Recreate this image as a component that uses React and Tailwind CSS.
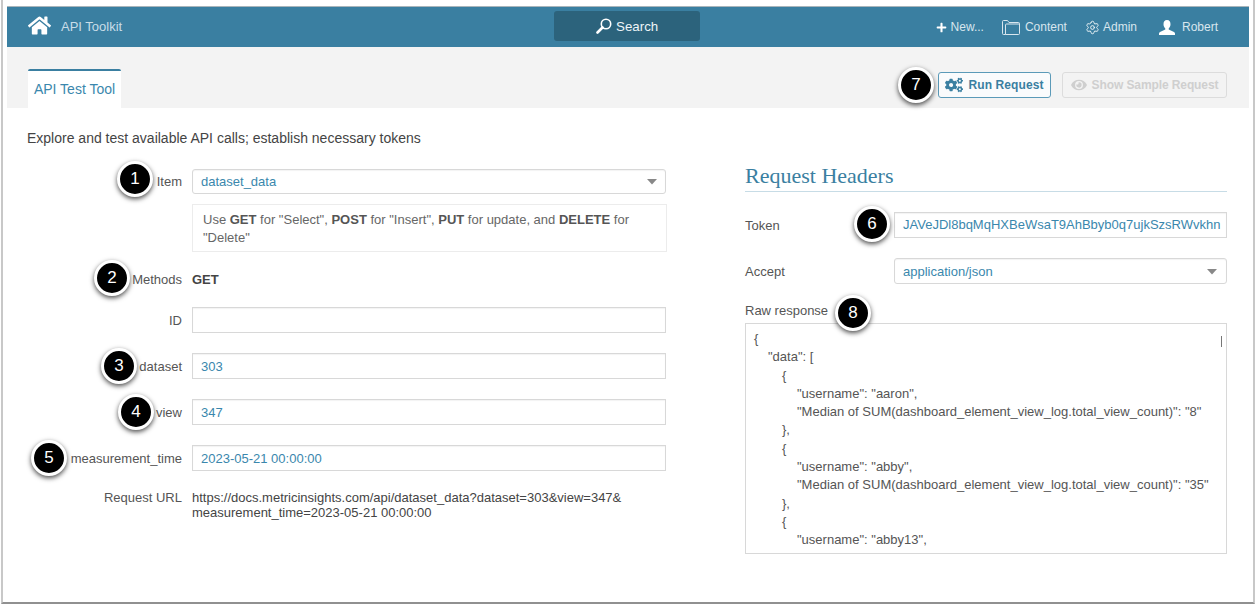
import React from "react";
import { FaHome, FaPlus, FaCogs, FaEye } from "react-icons/fa";
import { Settings } from "lucide-react";

function Badge({ n, className }) {
  return (
    <div
      className={
        "absolute w-[36px] h-[36px] rounded-full bg-black border-[3px] border-white shadow-[0_2px_5px_rgba(0,0,0,0.7)] flex items-center justify-center text-white text-[17px] font-['Liberation_Sans',sans-serif] " +
        className
      }
    >
      {n}
    </div>
  );
}

function Caret() {
  return (
    <svg width="10" height="6" viewBox="0 0 10 6" className="text-[#888]">
      <path d="M0 0h10L5 5.5z" fill="currentColor" />
    </svg>
  );
}

function Folder() {
  return (
    <svg width="18" height="15" viewBox="0 0 18 15" fill="none" stroke="currentColor" strokeWidth="1">
      <path d="M3.500 14.500h-2a1 1 0 0 1-1-1V1.500a1 1 0 0 1 1-1h4l1.500 2h9.500a1 1 0 0 1 1 1v10a1 1 0 0 1-1 1z" />
      <path d="M3.500 14.500V5a1 1 0 0 1 1-1h13" />
    </svg>
  );
}

function UserBust() {
  return (
    <svg width="16" height="15" viewBox="0 0 16 15" fill="currentColor">
      <path d="M8 0C5.500 0 4.500 2 4.500 4.200c0 2 1 3.500 1.800 4.200v1.200L1 12c-.7.4-1 1-1 1.500V15h16v-1.500c0-.5-.3-1.100-1-1.500L9.700 9.600V8.400c.8-.7 1.800-2.200 1.800-4.200C11.500 2 10.500 0 8 0z" />
    </svg>
  );
}

function Magnifier() {
  return (
    <svg width="16" height="16" viewBox="0 0 16 16" fill="none" stroke="#ffffff">
      <circle cx="10" cy="6" r="4.700" strokeWidth="1.600" />
      <path d="M6.500 9.500L1.500 14.500" strokeWidth="2.600" strokeLinecap="round" />
    </svg>
  );
}

function Row({ label, children, className = "" }) {
  return (
    <div className={"flex items-center " + className}>
      <div className="w-[155px] shrink-0 mr-[10px] pt-px text-right text-[13px] text-[#555]">{label}</div>
      {children}
    </div>
  );
}

function Box({ value, h = "h-[26px] pt-px", pr = "pr-[8px]", select = false, rounded = false, className = "" }) {
  return (
    <div
      className={`flex items-center justify-between bg-white border border-[#d8d8d8] shadow-[inset_0_1px_1px_rgba(0,0,0,0.05)] pl-[8px] text-[13px] text-[#3a87ad] whitespace-nowrap overflow-hidden ${h} ${pr} ${rounded ? "rounded-[3px]" : ""} ${className}`}
    >
      <span>{value}</span>
      {select && <Caret />}
    </div>
  );
}

const json = [
  [0, "{"],
  [1, '"data": ['],
  [2, "{"],
  [3, '"username": "aaron",'],
  [3, '"Median of SUM(dashboard_element_view_log.total_view_count)": "8"'],
  [2, "},"],
  [2, "{"],
  [3, '"username": "abby",'],
  [3, '"Median of SUM(dashboard_element_view_log.total_view_count)": "35"'],
  [2, "},"],
  [2, "{"],
  [3, '"username": "abby13",'],
];
const indents = ["pl-0", "pl-[14px]", "pl-[28px]", "pl-[43px]"];

export default function App() {
  return (
    <div className="relative w-[1256px] h-[606px] bg-white overflow-hidden font-['Liberation_Sans',Arial,sans-serif]">
      <div className="ml-px mr-px h-[604px] border-x-2 border-b-2 border-x-[#c8c8c8] border-b-[#909090] px-[4px] pt-[6px] flex flex-col">
        {/* top bar */}
        <header className="relative h-[41px] shrink-0 bg-[#3a7fa1] border-t border-t-[#a9b5bb] flex items-center text-[#d8e6ee] pl-[21px] pr-[31px]">
          <FaHome className="text-white w-[23px] h-[23px] -mt-[3px]" />
          <span className="ml-[10px] text-[13px] text-[#c9dde8]">API Toolkit</span>
          <div className="ml-[432px] -mt-[2px] w-[146px] h-[30px] rounded-[3px] bg-[#2c637c] flex items-center justify-center gap-[4px] text-[13.300px] text-[#eef5f8]">
            <Magnifier />
            <span className="pt-px">Search</span>
          </div>
          <div className="ml-auto flex items-center text-[12px]">
            <FaPlus className="w-[11px] h-[11px] text-white" />
            <span className="ml-[4px]">New...</span>
            <span className="ml-[18px]"><Folder /></span>
            <span className="ml-[5px]">Content</span>
            <Settings className="ml-[18px] w-[15px] h-[15px] text-[#eef5f8]" strokeWidth={1.500} />
            <span className="ml-[3px]">Admin</span>
            <span className="ml-[22px] text-white"><UserBust /></span>
            <span className="ml-[7px]">Robert</span>
          </div>
        </header>

        {/* tab band */}
        <div className="h-[61px] shrink-0 bg-[#f3f3f3] flex items-end pl-[21px] pr-[22px]">
          <div className="w-[93px] h-[39px] bg-white border-t-2 border-t-[#3a7fa1] rounded-t-[2px] flex items-center justify-center text-[14px] text-[#3a87ad]">
            API Test Tool
          </div>
          <div className="ml-auto self-start mt-[25px] flex items-center gap-[11px] text-[12px] font-bold">
            <div className="w-[113px] h-[26px] bg-[#fafbfc] border border-[#5b9ab8] rounded-[3px] flex items-center justify-center gap-[5px] tracking-[0.1px] text-[#3a7fa1]">
              <FaCogs className="w-[18px] h-[16px]" />
              Run Request
            </div>
            <div className="w-[165px] h-[26px] border border-[#dcdcdc] rounded-[3px] flex items-center justify-center gap-[5px] tracking-[-0.1px] text-[#cfcfcf]">
              <FaEye className="w-[16px] h-[14px]" />
              Show Sample Request
            </div>
          </div>
        </div>

        {/* body */}
        <main className="flex-1 pl-[20px]">
          <p className="mt-[21px] text-[14px] leading-[18px] text-[#444]">
            Explore and test available API calls; establish necessary tokens
          </p>
          <div className="mt-[15px] flex">
            <div className="w-[639px] shrink-0 pt-[7px]">
              <Row label="Item">
                <Box value="dataset_data" h="h-[25px]" select rounded className="w-[475px]" />
              </Row>
              <div className="ml-[165px] mt-[10px] w-[475px] h-[48px] border border-[#ececec] px-[10px] pt-[6px] text-[13px] leading-[18px] text-[#666]">
                Use <b className="text-[#555]">GET</b> for "Select", <b className="text-[#555]">POST</b> for "Insert", <b className="text-[#555]">PUT</b> for update, and <b className="text-[#555]">DELETE</b> for "Delete"
              </div>
              <Row label="Methods" className="mt-[18px] h-[18px]">
                <b className="pt-px text-[13px] text-[#444]">GET</b>
              </Row>
              <Row label="ID" className="mt-[19px]">
                <Box value="" className="w-[475px]" />
              </Row>
              <Row label="dataset" className="mt-[20px]">
                <Box value="303" className="w-[475px]" />
              </Row>
              <Row label="view" className="mt-[20px]">
                <Box value="347" className="w-[475px]" />
              </Row>
              <Row label="measurement_time" className="mt-[20px]">
                <Box value="2023-05-21 00:00:00" className="w-[475px]" />
              </Row>
              <div className="flex mt-[19px] text-[13px] leading-[15px] text-[#444]">
                <div className="w-[155px] shrink-0 mr-[10px] text-right text-[#555]">Request URL</div>
                <div className="w-[475px]">
                  https://docs.metricinsights.com/api/dataset_data?dataset=303&view=347&
                  <br />
                  measurement_time=2023-05-21 00:00:00
                </div>
              </div>
            </div>

            <div className="ml-[79px] w-[482px] shrink-0">
              <h2 className="h-[30px] border-b border-b-[#c7dce6] font-['Liberation_Serif',serif] text-[22px] leading-[28px] text-[#3a7fa1]">
                Request Headers
              </h2>
              <div className="mt-[20px] flex items-center">
                <div className="w-[149px] shrink-0 pt-px text-[13px] text-[#555]">Token</div>
                <Box value="JAVeJDl8bqMqHXBeWsaT9AhBbyb0q7ujkSzsRWvkhn" h="h-[26px]" className="w-[333px]" />
              </div>
              <div className="mt-[20px] flex items-center">
                <div className="w-[149px] shrink-0 pt-px text-[13px] text-[#555]">Accept</div>
                <Box value="application/json" pr="pr-[9px]" select rounded className="w-[333px]" />
              </div>
              <div className="mt-[18px] h-[21px] text-[13px] leading-[18px] text-[#555]">Raw response</div>
              <div className="relative h-[231px] border border-[#d8d8d8] overflow-hidden pl-[8px] pt-[6px] text-[13px] leading-[18.300px] text-[#555] whitespace-nowrap">
                {json.map(([d, t], i) => (
                  <div key={i} className={indents[d]}>{t}</div>
                ))}
                <div className="absolute right-[4px] top-[12px] w-px h-[11px] bg-[#777]" />
              </div>
            </div>
          </div>
        </main>
      </div>

      <Badge n="1" className="left-[117px] top-[161px]" />
      <Badge n="2" className="left-[94px] top-[260px]" />
      <Badge n="3" className="left-[101px] top-[348px]" />
      <Badge n="4" className="left-[118px] top-[394px]" />
      <Badge n="5" className="left-[31px] top-[440px]" />
      <Badge n="6" className="left-[854px] top-[206px]" />
      <Badge n="7" className="left-[898px] top-[67px]" />
      <Badge n="8" className="left-[835px] top-[295px]" />
    </div>
  );
}
